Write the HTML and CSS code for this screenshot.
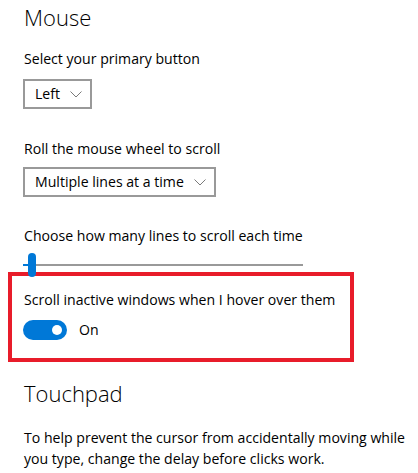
FILE: index.html
```html
<!DOCTYPE html>
<html>
<head>
<meta charset="utf-8">
<link rel="stylesheet" href="styles.css">
</head>
<body>
<main class="page">
  <h1 class="heading">Mouse</h1>
  <div class="label first">Select your primary button</div>
  <div class="select">
    <span class="select-text">Left</span>
    <svg class="chevron" width="12" height="7" viewBox="0 0 12 7"><path d="M0.5 0.5 L6 6 L11.5 0.5" fill="none" stroke="#7a7a7a" stroke-width="1"/></svg>
  </div>
  <div class="label second">Roll the mouse wheel to scroll</div>
  <div class="select">
    <span class="select-text">Multiple lines at a time</span>
    <svg class="chevron" width="12" height="7" viewBox="0 0 12 7"><path d="M0.5 0.5 L6 6 L11.5 0.5" fill="none" stroke="#7a7a7a" stroke-width="1"/></svg>
  </div>
  <div class="label third">Choose how many lines to scroll each time</div>
  <div class="slider">
    <div class="track"><div class="track-fill" style="width:5px"></div></div>
    <div class="thumb"></div>
  </div>
  <section class="highlight">
    <div class="label">Scroll inactive windows when I hover over them</div>
    <div class="toggle-row">
      <div class="toggle"><div class="knob"></div></div>
      <span class="toggle-text">On</span>
    </div>
  </section>
  <h2 class="heading touchpad">Touchpad</h2>
  <p class="para">To help prevent the cursor from accidentally moving while you type, change the delay before clicks work.</p>
</main>
</body>
</html>
```
FILE: styles.css
```css
html, body {
  margin: 0;
  padding: 0;
  background: #ffffff;
}
body {
  font-family: "Open Sans", "Noto Sans", sans-serif;
  color: #000000;
  font-size: 14.1px;
  line-height: 20px;
}
.page {
  padding: 3px 0 0 24px;
  display: flex;
  flex-direction: column;
  align-items: flex-start;
}
.heading {
  margin: 0;
  font-size: 22px;
  font-weight: 300;
  line-height: 29px;
}
.label {
  white-space: nowrap;
}
.label.first {
  margin-top: 17px;
  margin-bottom: 10px;
}
.label.second {
  margin-top: 30px;
  margin-bottom: 8px;
}
.label.third {
  margin-top: 29px;
}
.select {
  margin-left: -1px;
  height: 30px;
  box-sizing: border-box;
  border: 2px solid #999999;
  display: flex;
  align-items: center;
  padding: 0 8px 0 10px;
  gap: 10px;
}
.chevron {
  display: block;
  margin-top: 1px;
}
.slider {
  position: relative;
  z-index: 1;
  margin-top: 7px;
  margin-left: -1px;
  width: 280px;
  height: 24px;
  display: flex;
  align-items: center;
}
.track {
  width: 100%;
  height: 2px;
  background: #999999;
  display: flex;
}
.track-fill {
  height: 2px;
  background: #0078d7;
}
.thumb {
  position: absolute;
  left: 5px;
  top: 0;
  width: 8px;
  height: 24px;
  border-radius: 4px;
  background: #0078d7;
}
.highlight {
  margin: -5px 0 0 -16px;
  width: 346px;
  height: 90px;
  box-sizing: border-box;
  border: 4px solid #e81c2a;
  padding: 14px 0 0 12px;
}
.toggle-row {
  margin-top: 10px;
  display: flex;
  align-items: center;
  gap: 12px;
}
.toggle {
  margin-left: -1px;
  width: 44px;
  height: 20px;
  border-radius: 10px;
  background: #0078d7;
  display: flex;
  align-items: center;
  justify-content: flex-end;
  padding-right: 5px;
  box-sizing: border-box;
}
.knob {
  width: 10px;
  height: 10px;
  border-radius: 50%;
  background: #ffffff;
}
.touchpad {
  margin-top: 17px;
}
.para {
  margin: 19px 0 0 0;
  width: 390px;
  line-height: 21px;
}
```
